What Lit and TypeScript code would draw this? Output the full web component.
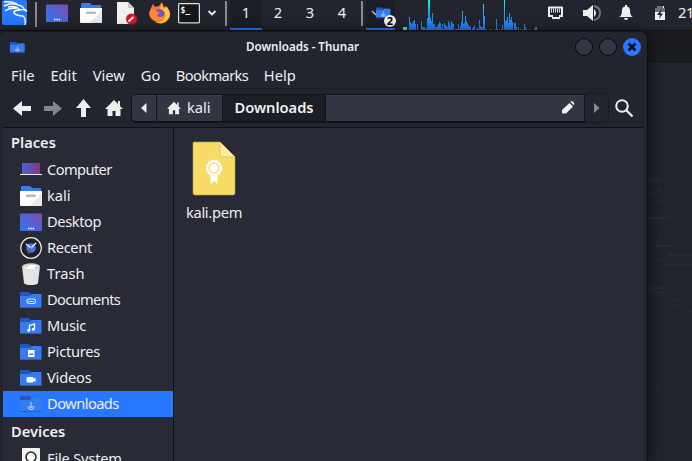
import { LitElement, html, svg, css } from "lit";
import { customElement } from "lit/decorators.js";

const load = [13,8,6,7,9,10,6,0,6,0,0,0,9,3,3,3,1,2,12,30,30,12,9,17,6,6,3,3,4,6,8,7,2,6,1,7,5,4,3,9,7,4,9,7,6,0,1,1,1,6,1,4,8,19,6,7,14,9,7,5,3,4,0,2,3,5,0,1,2,1,10,4,3,3,26,14,1,1,0,0,1,0,1,0,0,0,1,11,1,0,1,0,1,5,0,30,9,10,13,7,17,10,13,8,0,7,7,3,0,3,0,1,0,1,0,6,3,1,0,0,1,0,0,0,0,1,3,3];

const folder = (mark: unknown) => svg`
  <path d="M0 4V4q0-1 1-1h8l2 2h10v4H0z" fill="#2457b8"/>
  <path d="M0 7h10l2-2h8.500q1 0 1 1v12H1q-1 0-1-1z" fill="#367bf0"/><path d="M0 18.500h21.500" stroke="#285fbe"/>${mark}`;

const downArrow = svg`<path d="M11 9v6M9 13l2 2 2-2M8 13.500q0 3 3 3t3-3" fill="none" stroke="#c5dcff" stroke-width="1"/>`;
const whiteFolder = svg`
  <path d="M1 5V2q0-1 1-1h8l2 2h9v5H1z" fill="#367bf0"/>
  <path d="M0 6h22v14q0 1-1 1H1q-1 0-1-1z" fill="#fff"/>
  <path d="M22 8v12q0 1-1 1H10z" fill="#e9e9e9"/>
  <rect x="6" y="9.500" width="10" height="2.500" rx="1" fill="#b9b9b9"/>`;
const screen = svg`
  <rect x="0" y="2.500" width="22" height="17.500" rx="1" fill="url(#g)"/>
  <path d="M8 17.500h1.500M10.300 17.500h1.500M12.600 17.500h1.500" stroke="#fff" stroke-width="1.300"/>`;
const defs = svg`<defs><linearGradient id="g" x1="0" y1="1" x2="1" y2="0"><stop stop-color="#2f78f4"/><stop offset="1" stop-color="#7c4cae"/></linearGradient>
  <linearGradient id="h"><stop stop-color="#4069d8"/><stop offset="1" stop-color="#8b317d"/></linearGradient></defs>`;

// label, letter spacing in px, icon
const places: [string, number, unknown][] = [
  ["Computer", -0.6, svg`<rect x="2" y="4" width="18" height="11" fill="url(#h)"/><path d="M0 15.500h22" stroke="#f2eff5"/>`],
  ["kali", 0, whiteFolder],
  ["Desktop", -0.4, screen],
  ["Recent", -0.35, svg`<circle cx="11" cy="11" r="10.300" fill="#20222b" stroke="#e6e6e8" stroke-width="1.200"/><circle cx="11" cy="11" r="4.800" fill="#367bf0"/><path d="M6 7l5 4 5-5" fill="none" stroke="#fff" stroke-width="1.200"/><path d="M11 10l-2.500 7" stroke="#c82f3a"/>`],
  ["Trash", 0, svg`<path d="M2 3l2 17q1 2 7 2t7-2l2-17z" fill="#e4e4e2"/><ellipse cx="11" cy="3.500" rx="9" ry="3.300" fill="#c9c9c4"/><ellipse cx="11" cy="4" rx="7" ry="2.300" fill="#fff"/><path d="M5 4l3-1" stroke="#d9ba50"/><path d="M15 5l2-1" stroke="#60a898"/>`],
  ["Documents", -0.65, folder(svg`<rect x="7" y="10" width="8.500" height="4.500" rx="2.200" fill="none" stroke="#d7e6ff" stroke-width="1.100"/><path d="M8.500 12.500h5" stroke="#d7e6ff"/>`)],
  ["Music", -0.2, folder(svg`<path d="M9.500 15v-4.500l5-1.500v5" fill="none" stroke="#fff" stroke-width="1.300"/><circle cx="8.700" cy="15.300" r="1.500" fill="#fff"/><circle cx="13.300" cy="14.300" r="1.500" fill="#fff"/>`)],
  ["Pictures", -0.25, folder(svg`<rect x="8" y="9" width="6.500" height="7" fill="#fff"/><path d="M9 14l1.500-2 1 1 1-1 1 2z" fill="#367bf0"/>`)],
  ["Videos", -0.2, folder(svg`<rect x="6.500" y="10" width="7" height="5.500" rx="1" fill="#fff"/><path d="M13 12l2.500-1.500v4.500L13 13.500z" fill="#fff"/>`)],
  ["Downloads", -0.55, folder(downArrow)],
];

const home = svg`<path d="M9 1L0 10h2.500v7h5v-5h3v5h5v-7H18L15 7V2h-2v3z" fill="#eeeeec"/>`;
const arrow = svg`<path d="M9 1v5h9v5H9v5L0 8.500z" fill="currentColor"/>`;

@customElement("app-root")
class AppRoot extends LitElement {
  static styles = css`
    :host { display: block; position: relative; width: 692px; height: 461px; overflow: hidden; background: #22242d; color: #eeeef0; font: 14.667px/20px "Noto Sans", sans-serif; }
    * { box-sizing: border-box; }
    svg { display: block; flex: none; }
    .panel { height: 30px; display: flex; background: #23252e; position: relative; }
    .launch { width: 225px; flex: none; display: flex; align-items: center; padding-bottom: 4px; }
    .logo { width: 28px; height: 26px; margin-right: 7px; }
    .sep { width: 2px; height: 25px; background: #8c8c90; margin-top: 1px; flex: none; }
    .launch .sep { margin-top: 2px; }
    .ws { margin-left: 3px; display: flex; flex: none; }
    .ws span { width: 32px; height: 30px; text-align: center; line-height: 25px; }
    .ws .on { background: #1c1e26; border-bottom: 2px solid #2777ff; }
    .end { margin-left: 3px; }
    .task { margin-left: 3px; width: 29px; height: 30px; flex: none; background: #1c1e26; border-bottom: 2px solid #2777ff; position: relative; }
    .badge { position: absolute; left: 18px; top: 15px; width: 12px; height: 12px; border-radius: 6px; background: #f2f2f2; color: #000; font: bold 11px/12px "Noto Sans", sans-serif; text-align: center; }
    .graph { margin-left: 8px; }
    .tray { display: flex; align-items: flex-start; flex: 1; }
    .clock { line-height: 25px; white-space: nowrap; letter-spacing: -.5px; }
    .back { position: relative; height: 431px; background: #22242d; border-top: 1px solid #14151a; }
    .rear { position: absolute; left: 640px; right: 0; top: 0; height: 31px; background: #1b1c21; border-bottom: 1px solid #111216; }
    .haze { position: absolute; left: 647px; top: 31px; }
    .win { position: relative; margin-top: 1px; width: 647px; height: 429px; background: #23252e; border-radius: 6px 6px 0 0; box-shadow: 1px 0 0 #0d0e12, 2px 0 14px #0009; padding: 0 4px 0 3px; }
    .title { height: 30px; display: flex; align-items: center; padding: 0 2px 0 7px; font-weight: 600; font-size: 11.600px; }
    .title .name { flex: 1; text-align: center; padding-left: 11px; line-height: 20px; }
    .btn { width: 18px; height: 18px; border-radius: 9px; border: 1px solid #08090c; background: #333642; margin-left: 6px; flex: none; }
    .close { border: 0; background: #2777ff; }
    .menu { height: 27px; display: flex; gap: 16px; padding: 0 8px; line-height: 26px; border-bottom: 1px solid #1f2129; }
    .bm { letter-spacing: -.6px; margin: 0 -.4px 0 -.6px; }
    .tools { height: 39px; display: flex; align-items: center; border-bottom: 1px solid #0f1015; }
    .nav { display: flex; align-items: center; width: 128px; padding-left: 10px; gap: 12px; }
    .dim { color: #858588; margin-left: 1px; }
    .path { height: 29px; display: flex; border: 1px solid #12131a; border-bottom-width: 2px; border-radius: 5px 0 0 5px; background: #333642; box-shadow: inset 0 1px #3d404c; width: 454px; }
    .path > div { display: flex; align-items: center; }
    .prev { width: 25px; border-right: 1px solid #15161c; padding-left: 9px; }
    .kali { width: 65px; padding-left: 10px; gap: 6px; line-height: 24px; }
    .cur { width: 104px; background: #1c1e25; border: solid #15161c; border-width: 0 1px; justify-content: center; font-weight: 600; }
    .lift { margin-top: -2px; }
    .entry { flex: 1; justify-content: flex-end; padding-right: 9px; }
    .next { width: 24px; height: 30px; display: flex; align-items: center; padding-left: 9px; border: 1px solid #1a1b22; border-left: 0; border-radius: 0 5px 5px 0; }
    .find { margin-left: 6px; }
    .body { display: flex; height: 333px; background: #282a35; }
    .side { width: 171px; border-right: 1px solid #101117; padding-top: 3px; flex: none; }
    .head { height: 26px; padding-left: 8px; line-height: 23px; font-weight: 600; }
    .row { height: 26px; padding-left: 17px; display: flex; align-items: center; gap: 5px; line-height: 24px; }
    .row.on { background: #2777ff; }
    .devices { height: 29px; line-height: 29px; }
    .file { width: 80px; padding-top: 13px; display: flex; flex-direction: column; align-items: center; gap: 5px; }
    .fname { letter-spacing: -.3px; }
  `;

  render() {
    return html`
      <div class="panel">
        <div class="launch">
          <svg class="logo" viewBox="0 0 28 26"><rect x="2" y="0" width="25" height="25" rx="2" fill="#2777ff"/><path d="M4 6Q12 2 18 5Q23 6 24 9L27 11Q22 9 20 10Q13 10 14 13Q17 16 23 16Q26 18 25 25M20 10Q16 5 8 7M5 11Q9 8 17 8M4 2Q11 1 17 4" fill="none" stroke="#fff" stroke-width="1.400"/></svg>
          <div class="sep"></div>
          <svg width="22" height="22" style="margin-left:9px">${defs}${screen}</svg>
          <svg width="22" height="22" style="margin-left:12px">${whiteFolder}</svg>
          <svg width="22" height="24" style="margin-left:14px" viewBox="0 0 22 24"><path d="M1 1h11l6 6v15q0 1-1 1H1z" fill="#f1f1ef"/><path d="M12 1v6h6z" fill="#cacac8"/><circle cx="15.500" cy="18" r="5.500" fill="#d4161f"/><path d="M12.500 20.500l5-4.500" stroke="#fff" stroke-width="2"/></svg>
          <svg width="22" height="22" style="margin-left:11px" viewBox="0 0 22 22"><path d="M2 6l2-4 2 3 4-1 3-4 2 5 2-1 3 4q3 7-2 11-5 4-11 1-7-3-7-9z" fill="#ff7139"/><path d="M13 0q-1 5 2 7l3-2q5 7 1 12-5 7-13 3 8 1 10-5 1-6-5-8z" fill="#ffca36"/><circle cx="10.500" cy="12" r="5" fill="#7750cb"/><path d="M1 9q4-3 8 1l2 1q-3 1-3 3 5 3 8-2-1 7-7 7Q1 19 1 9z" fill="#ff8a2d"/></svg>
          <svg width="22" height="21" style="margin-left:7px"><rect x=".6" y=".6" width="20.800" height="19.300" rx="1" fill="#151819" stroke="#e2e2e0" stroke-width="1.200"/><text x="2.500" y="10" fill="#fff" font-family="DejaVu Sans Mono" font-size="8" font-weight="bold">$_</text></svg>
          <svg width="10" height="8" style="margin-left:7px"><path d="M1.500 2l3.500 3.500 3.500-3.500" fill="none" stroke="#eee" stroke-width="1.800"/></svg>
        </div>
        <div class="sep"></div>
        <div class="ws"><span class="on">1</span><span>2</span><span>3</span><span>4</span></div>
        <div class="sep end"></div>
        <div class="task">
          <svg width="26" height="22" viewBox="0 0 26 22"><g transform="translate(10 5.500) scale(.67)">${folder(downArrow)}</g><path d="M6 11l4 4" stroke="#bbb" stroke-width="1.500"/></svg>
          <span class="badge">2</span>
        </div>
        <svg class="graph" width="136" height="30"><defs><linearGradient id="bar" gradientUnits="userSpaceOnUse" x1="0" y1="0" x2="0" y2="30"><stop stop-color="#00ffe0"/><stop offset=".45" stop-color="#1aa0e8"/><stop offset="1" stop-color="#2777ff"/></linearGradient></defs><rect y="27" width="4" height="3" fill="#00ffd5"/>
          ${load.map((v, i) => svg`<rect x=${i + 6} y=${30 - v} width="1" height=${v} fill="url(#bar)"/>`)}
        </svg>
        <div class="tray">
          <svg width="139" height="27" viewBox="0 0 139 27">
            <path d="M10 6.500h13q1 0 1 1V17h-3v2h-8v-2h-4V7.500q0-1 1-1z" fill="#eeeeec"/><path d="M11 8.500h11v6.500h-2v2h-6v-2h-3z" fill="#24262f"/><path d="M12.500 8.500v4M14.500 8.500v4M16.500 8.500v4M18.500 8.500v4M20.500 8.500v4" stroke="#d8d8d8"/>
            <path d="M44 10h4l6-5v16l-6-5h-4z" fill="#eeeeec"/><path d="M55 9q4 4 0 8z" fill="#eeeeec"/><path d="M55 6q6 1 6 7t-6 7" fill="none" stroke="#777981" stroke-width="1.800"/>
            <path d="M80 17q3-1 3-7 0-3 3-3.500V5h2v1.500q3 .5 3 3.500 0 6 3 7zM85 18h4q0 2-2 2t-2-2z" fill="#eeeeec"/>
            <path d="M118 6h2h5v2h1v12h-10V8h2z" fill="#eeeeec"/><path d="M118 6h6v2h2v4h-10V8h2z" fill="#6d6e73"/><path d="M122.500 9l-4.500 6h3l-1 4 4-5.500h-2.500z" fill="#1b1c21"/>
          </svg><span class="clock">21</span>
        </div>
      </div>
      <div class="back">
        <div class="rear"></div>
        <svg class="haze" width="45" height="399"><g fill="none" stroke="#2b2e36" stroke-width="1.800" opacity=".6"><path d="M2 117l13 2M3 132l12-4M10 141l10-3M1 156h20M8 179l7-2M6 184h20M8 197l12 2M22 193h23M18 203h27M1 226h18M3 228l16 4M20 236l18 5M24 242l21 8M22 252l6 2M2 320l9 5"/></g></svg>
        <div class="win">
          <div class="title">
            <svg width="15" height="13" viewBox="0 2 22 18">${folder(downArrow)}</svg>
            <span class="name">Downloads - Thunar</span>
            <span class="btn"></span><span class="btn"></span>
            <svg class="btn close" viewBox="0 0 18 18"><path d="M5.500 5.500l7 7M12.500 5.500l-7 7" stroke="#0c1020" stroke-width="2.600"/></svg>
          </div>
          <div class="menu"><span>File</span><span>Edit</span><span>View</span><span>Go</span><span class="bm">Bookmarks</span><span>Help</span></div>
          <div class="tools">
            <div class="nav">
              <svg width="18" height="17">${arrow}</svg>
              <svg class="dim" width="18" height="17"><g transform="matrix(-1 0 0 1 18 0)">${arrow}</g></svg>
              <svg width="17" height="18" style="margin-left:1px"><g transform="matrix(0 1 -1 0 17 0)">${arrow}</g></svg>
              <svg width="18" height="18" style="margin-left:1px">${home}</svg>
            </div>
            <div class="path">
              <div class="prev"><svg width="6" height="10"><path d="M5.500 0v10L0 5z" fill="#eee"/></svg></div>
              <div class="kali"><svg width="14" height="14" viewBox="0 0 18 18">${home}</svg><span class="lift">kali</span></div>
              <div class="cur"><span class="lift">Downloads</span></div>
              <div class="entry"><svg width="13" height="13"><path d="M0 12.500V9L7.500 2 11 5.500 4 12.500zM8.500 1l1-1q2 0 3 3L11.500 4z" fill="#f2f2f2"/></svg></div>
            </div>
            <div class="next"><svg width="6" height="10"><path d="M0 0v10l5.500-5z" fill="#88898d"/></svg></div>
            <svg class="find" width="19" height="19"><circle cx="7" cy="7" r="5.800" fill="none" stroke="#eee" stroke-width="2"/><path d="M11 11l6.500 6.500" stroke="#eee" stroke-width="2.300"/></svg>
          </div>
          <div class="body">
            <div class="side">
              <div class="head">Places</div>
              ${places.map(([n, ls, i]) => html`<div class="row ${n === "Downloads" ? "on" : ""}"><svg width="22" height="22">${defs}${i}</svg><span class="lift" style="letter-spacing:${ls}px">${n}</span></div>`)}
              <div class="head devices">Devices</div>
              <div class="row"><svg width="22" height="22"><rect x="2" width="18" height="22" rx="1" fill="#f4f4f2"/><circle cx="11" cy="9" r="5" fill="#fff" stroke="#22242b" stroke-width="1.500"/></svg><span class="lift" style="letter-spacing:-.2px">File System</span></div>
            </div>
            <div class="file">
              <svg width="44" height="56"><path d="M2 1h26l15 15v36q0 2-2 2H3q-2 0-2-2V2q0-1 1-1z" fill="#f6db67" stroke="#b9a552" stroke-width=".6"/><path d="M28 1v13q0 2 2 2h13z" fill="#fbea9f"/><path d="M28 2v12q0 2 2 2h13" fill="none" stroke="#ceb85b" stroke-width=".7"/><circle cx="22" cy="27" r="6.500" fill="none" stroke="#fff" stroke-width="3.500" stroke-dasharray="3 .4"/><circle cx="22" cy="27" r="4.200" fill="#fff"/><circle cx="22" cy="27" r="5" fill="none" stroke="#f6db67"/><path d="M18.500 34v9l3.500-3 3.500 3v-9z" fill="#fff"/></svg>
              <span class="fname">kali.pem</span>
            </div>
          </div>
        </div>
      </div>`;
  }
}
